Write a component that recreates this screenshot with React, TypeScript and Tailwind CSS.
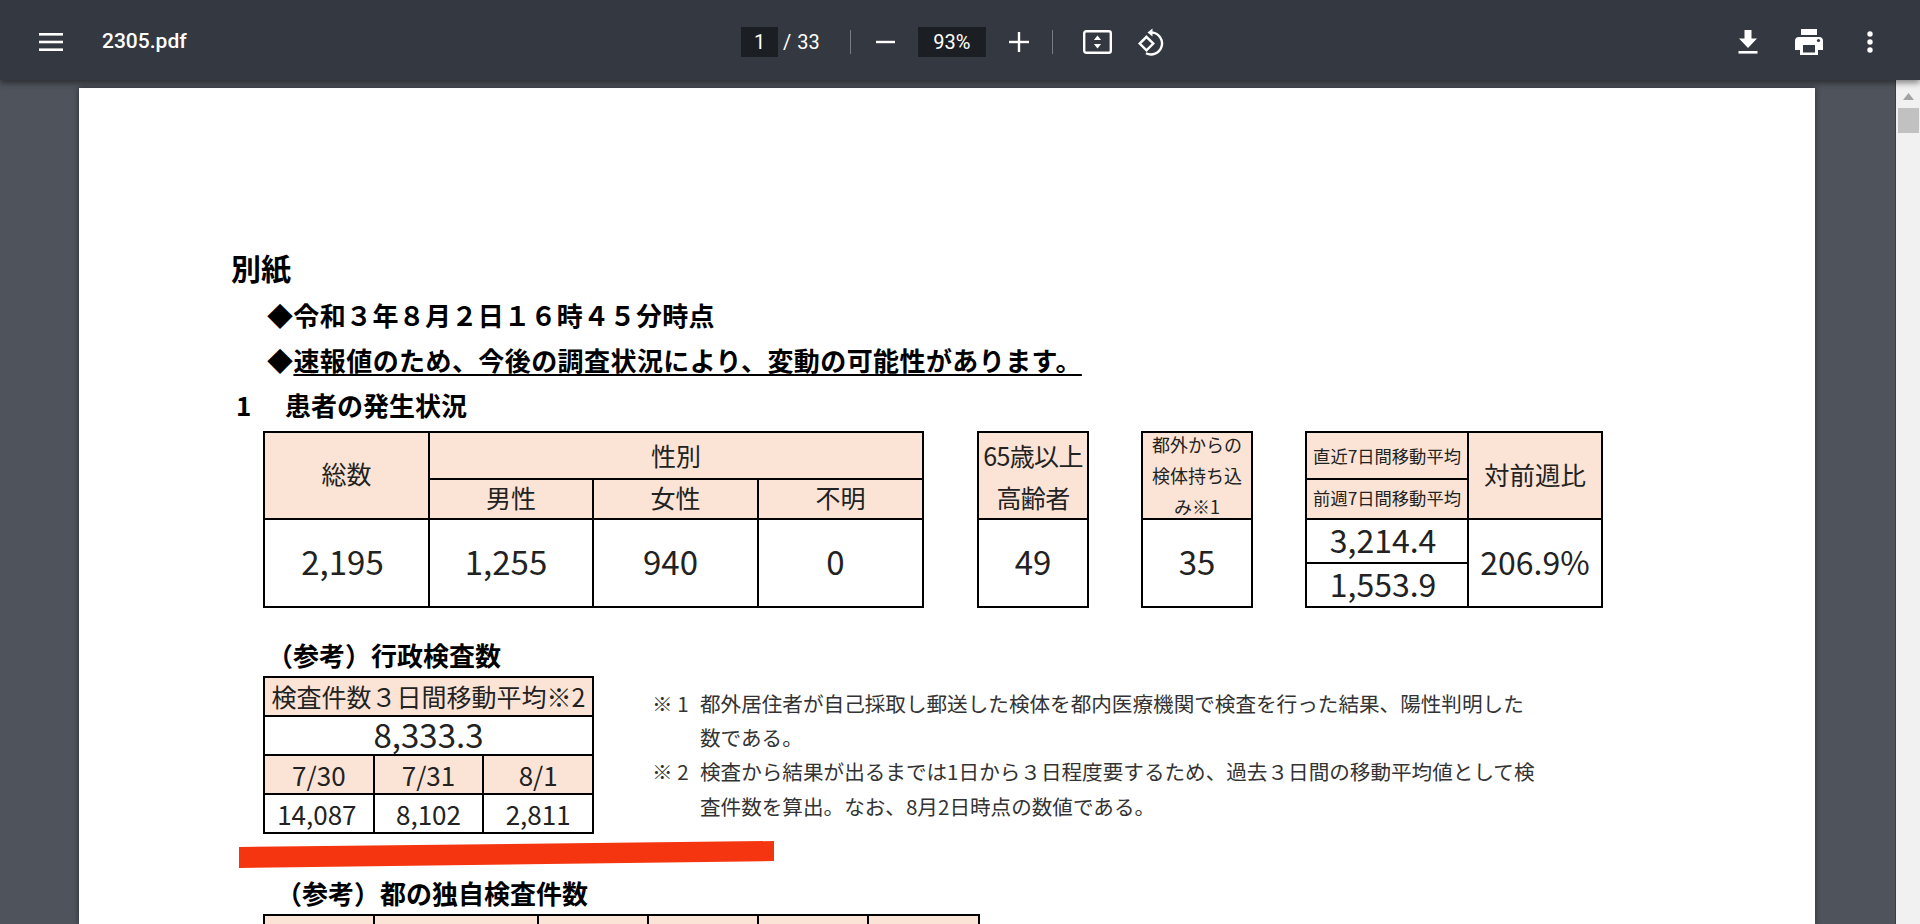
import type { ReactNode } from 'react'

const HEAD = 'bg-[#fbe4d5]'
const LIFT = 'pb-[4px]'

function Cell({ children, className = '', rowSpan, colSpan }: { children?: ReactNode; className?: string; rowSpan?: number; colSpan?: number }) {
  return (
    <td rowSpan={rowSpan} colSpan={colSpan} className={`border-2 border-black p-0 text-center align-middle leading-none ${className}`}>
      {children}
    </td>
  )
}

function Toolbar() {
  return (
    <div className="relative z-10 flex h-[80px] shrink-0 items-center justify-between bg-[#343840] pt-[4px] pr-[45px] pl-[39px] text-white shadow-[0_3px_6px_rgba(0,0,0,0.45)] [font-family:Roboto,sans-serif]">
      <div className="flex w-[600px] items-center">
        <svg width="24" height="18" viewBox="0 0 24 18" fill="#fff"><rect width="24" height="2.6" /><rect y="7.7" width="24" height="2.6" /><rect y="15.4" width="24" height="2.6" /></svg>
        <span className="ml-[39px] text-[21px] font-medium">2305.pdf</span>
      </div>

      <div className="absolute top-0 left-[741px] flex h-[80px] items-center pt-[4px] text-[20px]">
        <span className="flex h-[30px] w-[37px] items-center justify-center bg-[#1b1e22]">1</span>
        <span className="ml-[5px]">/</span>
        <span className="ml-[6px]">33</span>
        <span className="ml-[30px] h-[24px] w-px bg-[#777b82]" />
        <svg className="ml-[25px]" width="20" height="20" viewBox="0 0 20 20" fill="#fff"><rect y="8.8" width="19" height="2.4" /></svg>
        <span className="ml-[22px] flex h-[30px] w-[68px] items-center justify-center bg-[#1b1e22]">93%</span>
        <svg className="ml-[23px]" width="20" height="20" viewBox="0 0 20 20" fill="#fff"><rect y="8.8" width="20" height="2.4" /><rect x="8.8" width="2.4" height="20" /></svg>
        <span className="ml-[23px] h-[24px] w-px bg-[#777b82]" />
        <svg className="ml-[30px]" width="29" height="24" viewBox="0 0 29 24" fill="none"><rect x="1.2" y="1.2" width="26.6" height="21.6" rx="2" stroke="#fff" strokeWidth="2.4" /><path d="M14.5 5.5l3.6 4.5h-7.2zM14.5 18.5l-3.6-4.5h7.2z" fill="#fff" /></svg>
        <svg className="ml-[25px]" width="28" height="28" viewBox="0 0 28 28" fill="none"><path d="M9.5 8.8l6.8 6.8-6.8 6.8-6.8-6.8z" stroke="#fff" strokeWidth="2.4" /><path d="M9 25.2A11 11 0 1 0 16 4.6H13" stroke="#fff" strokeWidth="2.4" /><path d="M15.5 0.5v8l-5-4z" fill="#fff" /></svg>
      </div>

      <div className="flex items-center">
        <svg width="20" height="24" viewBox="0 0 20 24" fill="#fff"><path d="M6.5 0h7v8.5H19L10 18 1 8.5h5.5z" /><rect x="0.5" y="21" width="19" height="2.6" /></svg>
        <svg className="ml-[37px]" width="28" height="26" viewBox="0 0 28 26" fill="#fff"><path d="M6 0h16v6H6zM4 8h20a4 4 0 0 1 4 4v9h-5v5H5v-5H0v-9a4 4 0 0 1 4-4z" /><rect x="8" y="16" width="12" height="7.5" fill="#343840" /><circle cx="23.5" cy="11.5" r="1.6" fill="#343840" /></svg>
        <svg className="ml-[42px]" width="10" height="22" viewBox="0 0 10 22" fill="#fff"><circle cx="5" cy="3" r="2.7" /><circle cx="5" cy="11" r="2.7" /><circle cx="5" cy="19" r="2.7" /></svg>
      </div>
    </div>
  )
}

function Scrollbar() {
  return (
    <div className="flex w-[25px] shrink-0 flex-col items-center border-l border-[#3c3f45] bg-[#f1f1f1]">
      <svg className="mt-[13px]" width="11" height="7" viewBox="0 0 11 7" fill="#a3a3a3"><path d="M5.5 0L11 7H0z" /></svg>
      <div className="mt-[8px] h-[25px] w-[21px] bg-[#c1c1c1]" />
    </div>
  )
}

function Page() {
  return (
    <div className="relative mt-[8px] w-[1736px] shrink-0 bg-white pt-[163px] pl-[184px] text-[#222] shadow-[0_0_6px_rgba(0,0,0,0.45)] [font-family:'Noto_Sans_CJK_JP',sans-serif]">
      <div className="-ml-[32px] h-[32px] text-[30px] leading-[32px] font-bold text-black">別紙</div>

      <div className="mt-[16px] ml-[4px] text-[26px] leading-[32px] font-bold tracking-[0.35px] text-black">◆令和３年８月２日１６時４５分時点</div>
      <div className="mt-[13px] ml-[4px] text-[26px] leading-[32px] font-bold tracking-[0.42px] text-black">
        ◆<span className="underline decoration-2 underline-offset-[3px]">速報値のため、今後の調査状況により、変動の可能性があります。</span>
      </div>
      <div className="mt-[13px] -ml-[27px] flex text-[26px] leading-[32px] font-bold text-black">
        <span className="w-[49px]">1</span>
        <span>患者の発生状況</span>
      </div>

      <div className="mt-[10px] flex items-start">
        <table className="w-[659px] table-fixed border-collapse">
          <colgroup><col className="w-[165px]" /><col className="w-[164px]" /><col className="w-[165px]" /><col className="w-[165px]" /></colgroup>
          <tbody>
            <tr className="h-[47px] text-[25px]">
              <Cell rowSpan={2} className={`${HEAD} ${LIFT}`}>総数</Cell>
              <Cell colSpan={3} className={`${HEAD} pb-[1px]`}>性別</Cell>
            </tr>
            <tr className="h-[40px] text-[25px]">
              <Cell className={`${HEAD} ${LIFT}`}>男性</Cell>
              <Cell className={`${HEAD} ${LIFT}`}>女性</Cell>
              <Cell className={`${HEAD} ${LIFT}`}>不明</Cell>
            </tr>
            <tr className="h-[88px] text-[33px]">
              <Cell className={LIFT}><span className="-ml-[8px]">2,195</span></Cell>
              <Cell className={LIFT}><span className="-ml-[10px]">1,255</span></Cell>
              <Cell className={LIFT}><span className="-ml-[10px]">940</span></Cell>
              <Cell className={LIFT}><span className="-ml-[10px]">0</span></Cell>
            </tr>
          </tbody>
        </table>

        <table className="ml-[53px] w-[112px] table-fixed border-collapse">
          <tbody>
            <tr className="h-[87px] text-[25px]">
              <Cell className={`${HEAD} !leading-[42px] tracking-[-0.6px]`}>65歳以上<br />高齢者</Cell>
            </tr>
            <tr className="h-[88px] text-[33px]"><Cell className={LIFT}>49</Cell></tr>
          </tbody>
        </table>

        <table className="ml-[52px] w-[112px] table-fixed border-collapse">
          <tbody>
            <tr className="h-[87px] text-[18px]">
              <Cell className={HEAD}>
                <div className="flex h-[84px] items-center justify-center leading-[31px]">
                  <div>都外からの<br />検体持ち込<br />み※1</div>
                </div>
              </Cell>
            </tr>
            <tr className="h-[88px] text-[33px]"><Cell className={LIFT}>35</Cell></tr>
          </tbody>
        </table>

        <table className="ml-[52px] w-[296px] table-fixed border-collapse">
          <colgroup><col className="w-[162px]" /><col className="w-[134px]" /></colgroup>
          <tbody>
            <tr className="h-[47px] text-[17.3px]">
              <Cell className={HEAD}><span className="whitespace-nowrap">直近7日間移動平均</span></Cell>
              <Cell rowSpan={2} className={`${HEAD} ${LIFT} text-[25.5px]`}>対前週比</Cell>
            </tr>
            <tr className="h-[40px] text-[17.3px]"><Cell className={`${HEAD} pb-[3px]`}><span className="whitespace-nowrap">前週7日間移動平均</span></Cell></tr>
            <tr className="h-[44px] text-[32px]">
              <Cell className={LIFT}><span className="-ml-[8px]">3,214.4</span></Cell>
              <Cell rowSpan={2} className={LIFT}>206.9%</Cell>
            </tr>
            <tr className="h-[44px] text-[32px]"><Cell className={LIFT}><span className="-ml-[8px]">1,553.9</span></Cell></tr>
          </tbody>
        </table>
      </div>

      <div className="mt-[31px] ml-[4px] text-[26px] leading-[32px] font-bold text-black">（参考）行政検査数</div>

      <div className="mt-[5px] flex items-start">
        <table className="w-[331px] table-fixed border-collapse">
          <tbody>
            <tr className="h-[39px] text-[25px]"><Cell colSpan={3} className={`${HEAD} whitespace-nowrap`}>検査件数３日間移動平均※2</Cell></tr>
            <tr className="h-[39px] text-[33px]"><Cell colSpan={3} className="pb-[3px]">8,333.3</Cell></tr>
            <tr className="h-[39px] text-[26px]">
              <Cell className={HEAD}>7/30</Cell>
              <Cell className={HEAD}>7/31</Cell>
              <Cell className={HEAD}>8/1</Cell>
            </tr>
            <tr className="h-[39px] text-[26px]">
              <Cell><span className="-ml-[4px]">14,087</span></Cell>
              <Cell>8,102</Cell>
              <Cell>2,811</Cell>
            </tr>
          </tbody>
        </table>

        <div className="mt-[10px] ml-[58px] grid w-[830px] grid-cols-[48px_1fr] text-[20.6px] leading-[34.2px] whitespace-nowrap text-[#333]">
          <span>※ 1</span>
          <span>都外居住者が自己採取し郵送した検体を都内医療機関で検査を行った結果、陽性判明した</span>
          <span />
          <span>数である。</span>
          <span>※ 2</span>
          <span>検査から結果が出るまでは1日から３日程度要するため、過去３日間の移動平均値として検</span>
          <span />
          <span>査件数を算出。なお、8月2日時点の数値である。</span>
        </div>
      </div>

      <div className="mt-[43px] ml-[13px] text-[26px] leading-[32px] font-bold text-black">（参考）都の独自検査件数</div>

      <table className="mt-[5px] w-[715px] table-fixed border-collapse">
        <colgroup><col className="w-[110px]" /><col className="w-[164px]" /><col className="w-[110px]" /><col className="w-[110px]" /><col className="w-[110px]" /><col className="w-[111px]" /></colgroup>
        <tbody>
          <tr className="h-[40px] text-[20px]">
            <Cell className={HEAD}>期間</Cell>
            <Cell className={HEAD}>検査件数</Cell>
            <Cell className={HEAD}>陽性数</Cell>
            <Cell className={HEAD}>陰性数</Cell>
            <Cell className={HEAD}>不明</Cell>
            <Cell className={HEAD}>判定中</Cell>
          </tr>
        </tbody>
      </table>

      {/* marker stroke drawn over the page */}
      <svg className="absolute top-[749px] left-[160px]" width="540" height="32" viewBox="0 0 540 32"><polygon points="0,10 535,4 535,24 0,31" fill="#f4350f" /></svg>
    </div>
  )
}

export default function App() {
  return (
    <div className="flex h-[924px] w-[1920px] flex-col overflow-hidden bg-[#4f535b]">
      <Toolbar />
      <div className="flex min-h-0 flex-1">
        <div className="flex min-w-0 flex-1 justify-start overflow-hidden pl-[79px]">
          <Page />
        </div>
        <Scrollbar />
      </div>
    </div>
  )
}
